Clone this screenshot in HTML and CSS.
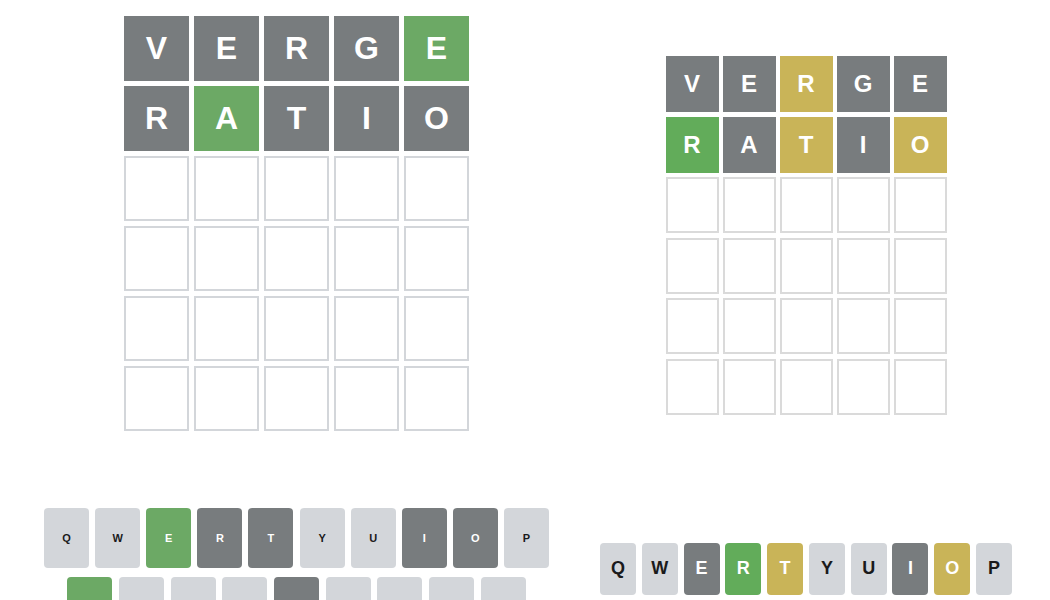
FILE: index.html
```html
<!DOCTYPE html>
<html lang="en">
<head>
<meta charset="utf-8">
<title>Wordle comparison</title>
<link rel="stylesheet" href="styles.css">
</head>
<body>
<main class="page">
  <section class="panel panel-left">
    <div class="board board-lg">
      <div class="tile absent">V</div><div class="tile absent">E</div><div class="tile absent">R</div><div class="tile absent">G</div><div class="tile correct">E</div>
      <div class="tile absent">R</div><div class="tile correct">A</div><div class="tile absent">T</div><div class="tile absent">I</div><div class="tile absent">O</div>
      <div class="tile"></div><div class="tile"></div><div class="tile"></div><div class="tile"></div><div class="tile"></div>
      <div class="tile"></div><div class="tile"></div><div class="tile"></div><div class="tile"></div><div class="tile"></div>
      <div class="tile"></div><div class="tile"></div><div class="tile"></div><div class="tile"></div><div class="tile"></div>
      <div class="tile"></div><div class="tile"></div><div class="tile"></div><div class="tile"></div><div class="tile"></div>
    </div>
    <div class="keyboard kb-lg">
      <div class="kb-row">
        <div class="key">Q</div><div class="key">W</div><div class="key correct">E</div><div class="key absent">R</div><div class="key absent">T</div><div class="key">Y</div><div class="key">U</div><div class="key absent">I</div><div class="key absent">O</div><div class="key">P</div>
      </div>
      <div class="kb-row kb-row-2">
        <div class="key correct">A</div><div class="key">S</div><div class="key">D</div><div class="key">F</div><div class="key absent">G</div><div class="key">H</div><div class="key">J</div><div class="key">K</div><div class="key">L</div>
      </div>
    </div>
  </section>
  <section class="panel panel-right">
    <div class="board board-sm">
      <div class="tile absent">V</div><div class="tile absent">E</div><div class="tile present">R</div><div class="tile absent">G</div><div class="tile absent">E</div>
      <div class="tile correct">R</div><div class="tile absent">A</div><div class="tile present">T</div><div class="tile absent">I</div><div class="tile present">O</div>
      <div class="tile"></div><div class="tile"></div><div class="tile"></div><div class="tile"></div><div class="tile"></div>
      <div class="tile"></div><div class="tile"></div><div class="tile"></div><div class="tile"></div><div class="tile"></div>
      <div class="tile"></div><div class="tile"></div><div class="tile"></div><div class="tile"></div><div class="tile"></div>
      <div class="tile"></div><div class="tile"></div><div class="tile"></div><div class="tile"></div><div class="tile"></div>
    </div>
    <div class="keyboard kb-sm">
      <div class="kb-row">
        <div class="key">Q</div><div class="key">W</div><div class="key absent">E</div><div class="key correct">R</div><div class="key present">T</div><div class="key">Y</div><div class="key">U</div><div class="key absent">I</div><div class="key present">O</div><div class="key">P</div>
      </div>
    </div>
  </section>
</main>
</body>
</html>
```
FILE: styles.css
```css
html, body {
  margin: 0;
  padding: 0;
  background: #ffffff;
  overflow: hidden;
}
body {
  font-family: "Liberation Sans", Arial, Helvetica, sans-serif;
  color: #1a1a1b;
}
.page {
  display: flex;
  width: 1050px;
  height: 600px;
}
.panel {
  display: flex;
  flex-direction: column;
  align-items: center;
}
.panel-left {
  width: 593px;
  padding-top: 16px;
}
.panel-right {
  width: 426px;
  padding-top: 56px;
}
.board {
  display: grid;
  grid-template-columns: repeat(5, auto);
}
.tile {
  box-sizing: border-box;
  display: flex;
  align-items: center;
  justify-content: center;
  font-weight: 700;
  color: #ffffff;
  border: 2px solid #d3d6da;
  background: #ffffff;
  text-transform: uppercase;
}
.board-lg {
  gap: 5px;
}
.board-lg .tile {
  width: 65px;
  height: 65px;
  font-size: 32px;
}
.board-sm {
  column-gap: 4px;
  row-gap: 4.6px;
}
.board-sm .tile {
  width: 53px;
  height: 56px;
  font-size: 24px;
  border-color: #dadada;
}
.tile.absent {
  background: #787c7e;
  border-color: #787c7e;
}
.tile.correct {
  background: #6ca965;
  border-color: #6ca965;
}
.board-sm .tile.correct {
  background: #62ac5a;
  border-color: #62ac5a;
}
.tile.present {
  background: #c9b458;
  border-color: #c9b458;
}
.keyboard {
  display: flex;
  flex-direction: column;
}
.kb-row {
  display: flex;
  justify-content: center;
}
.key {
  display: flex;
  align-items: center;
  justify-content: center;
  background: #d3d6da;
  color: #1a1a1b;
  font-weight: 700;
  border-radius: 4px;
}
.key.absent {
  background: #787c7e;
  color: #ffffff;
}
.key.correct {
  background: #6ca965;
  color: #ffffff;
}
.key.present {
  background: #c9b458;
  color: #ffffff;
}
.kb-lg {
  margin-top: 77px;
  row-gap: 9px;
}
.kb-lg .kb-row {
  gap: 6.1px;
}
.kb-lg .kb-row-2 {
  gap: 6.7px;
}
.kb-lg .key {
  width: 45px;
  height: 60px;
  font-size: 11px;
}
.kb-sm {
  margin-top: 128px;
}
.kb-sm .kb-row {
  gap: 5.8px;
}
.kb-sm .key {
  width: 36px;
  height: 52px;
  font-size: 18px;
}
.kb-sm .key.correct {
  background: #62ac5a;
}
```
